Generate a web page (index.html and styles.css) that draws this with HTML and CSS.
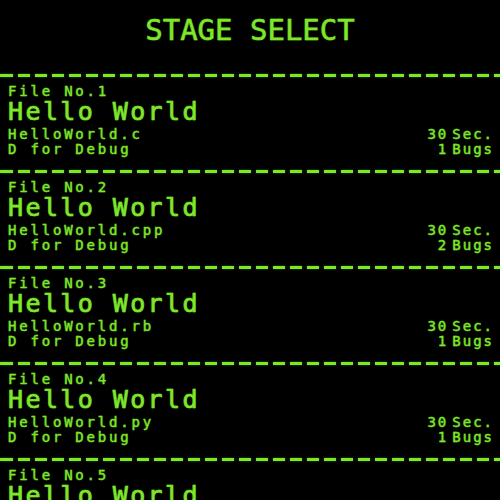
FILE: index.html
```html
<!DOCTYPE html>
<html>
<head>
<meta charset="utf-8">
<link rel="stylesheet" href="styles.css">
</head>
<body>
<header class="head"><h1 class="title">STAGE SELECT</h1></header>
<ul class="stages">
  <li class="stage">
    <div class="no">File No.1</div>
    <div class="name">Hello World</div>
    <div class="row"><span>HelloWorld.c</span><span class="stat"><span class="num">30</span><span class="unit">Sec.</span></span></div>
    <div class="row"><span>D for Debug</span><span class="stat"><span class="num">1</span><span class="unit">Bugs</span></span></div>
  </li>
  <li class="stage">
    <div class="no">File No.2</div>
    <div class="name">Hello World</div>
    <div class="row"><span>HelloWorld.cpp</span><span class="stat"><span class="num">30</span><span class="unit">Sec.</span></span></div>
    <div class="row"><span>D for Debug</span><span class="stat"><span class="num">2</span><span class="unit">Bugs</span></span></div>
  </li>
  <li class="stage">
    <div class="no">File No.3</div>
    <div class="name">Hello World</div>
    <div class="row"><span>HelloWorld.rb</span><span class="stat"><span class="num">30</span><span class="unit">Sec.</span></span></div>
    <div class="row"><span>D for Debug</span><span class="stat"><span class="num">1</span><span class="unit">Bugs</span></span></div>
  </li>
  <li class="stage">
    <div class="no">File No.4</div>
    <div class="name">Hello World</div>
    <div class="row"><span>HelloWorld.py</span><span class="stat"><span class="num">30</span><span class="unit">Sec.</span></span></div>
    <div class="row"><span>D for Debug</span><span class="stat"><span class="num">1</span><span class="unit">Bugs</span></span></div>
  </li>
  <li class="stage">
    <div class="no">File No.5</div>
    <div class="name">Hello World</div>
  </li>
</ul>
</body>
</html>
```
FILE: styles.css
```css
html, body {
  margin: 0;
  padding: 0;
  background: #000;
  height: 500px;
  overflow: hidden;
}
body {
  color: #80e62a;
  font-family: "DejaVu Sans Mono", "Liberation Mono", monospace;
  font-weight: bold;
  text-shadow: 0 0 1px #2c6410, 0 0 2px #1d420b;
}
.head {
  height: 74px;
  padding-top: 13px;
  box-sizing: border-box;
}
.title {
  margin: 0;
  font-size: 29px;
  font-weight: normal;
  line-height: 34px;
  text-align: center;
  -webkit-text-stroke: 0.4px #80e62a;
}
.stages {
  list-style: none;
  margin: 0;
  padding: 0;
}
.stage {
  position: relative;
  padding: 10px 8px 13px 8px;
  height: 96px;
  box-sizing: border-box;
}
.stage::before {
  content: "";
  position: absolute;
  left: 0;
  right: 0;
  top: 0;
  height: 3px;
  background: repeating-linear-gradient(to right, #80e62a 0 12px, transparent 12px 17px);
  background-position: 1px 0;
  filter: drop-shadow(0 0 1px #2f6a12);
}
.no {
  font-size: 14px;
  line-height: 15px;
  letter-spacing: 2.8px;
  font-weight: normal;
  -webkit-text-stroke: 0.3px #80e62a;
}
.name {
  font-size: 25px;
  line-height: 26px;
  letter-spacing: 2.4px;
  font-weight: normal;
  -webkit-text-stroke: 0.6px #80e62a;
}
.row {
  display: flex;
  justify-content: space-between;
  font-size: 14px;
  line-height: 15px;
  letter-spacing: 2.8px;
  font-weight: normal;
  -webkit-text-stroke: 0.3px #80e62a;
}
.name + .row {
  margin-top: 2px;
}
.stat {
  display: flex;
  letter-spacing: 2px;
}
.num {
  min-width: 22px;
  text-align: right;
  margin-right: 4px;
}
.unit {
  margin-right: -2px;
}
```
